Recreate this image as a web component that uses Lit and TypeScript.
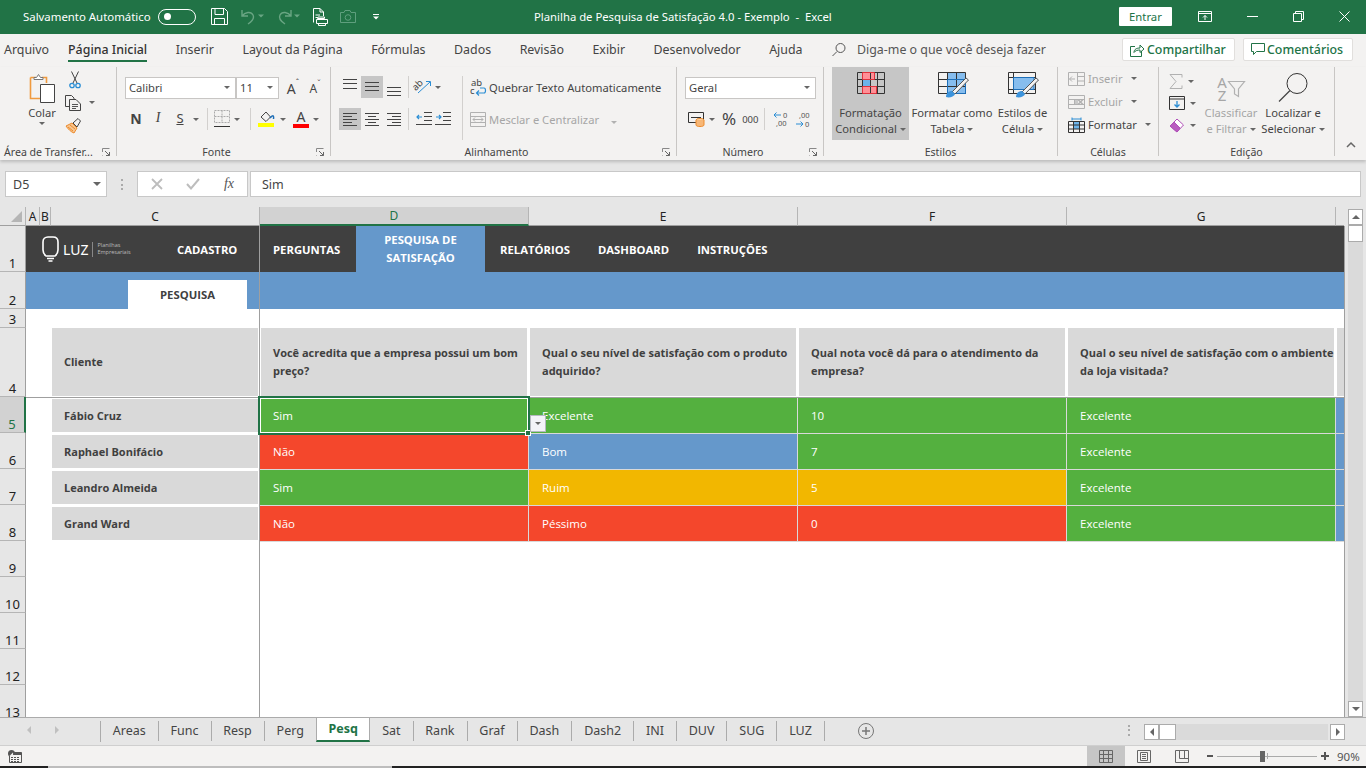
// app.ts
import { LitElement, html, css, svg } from 'lit';
import { customElement } from 'lit/decorators.js';

const ic = (w: number, h: number, body: unknown) => html`<svg class="ic" width=${w} height=${h} viewBox="0 0 ${w} ${h}" fill="none">${body}</svg>`;
const caret = html`<i class="caret"></i>`;

const lines = (items: number[][], c = '#444') =>
  ic(22, 22, items.map(([x1, x2, y]) => svg`<path d="M${x1} ${y + 0.5}H${x2}" stroke=${c}/>`));

const I = {
  save: ic(17, 17, svg`<path d="M.5.5H13.5L16.5 3.5V16.5H.5ZM4 .5V6.5H12.5V.5M3.5 16.5V10.5H13.5V16.5" stroke="#fff"/>`),
  undo: ic(24, 17, svg`<path d="M2 2V8H8M2 8C5 4 11 3 13 7C15 11 11 14 8 16" stroke="#69a583" stroke-width="1.4"/><path d="M18 6.5h6l-3 3z" fill="#69a583"/>`),
  redo: ic(24, 17, svg`<path d="M15 2V8H9M15 8C12 4 6 3 4 7C2 11 6 14 9 16" stroke="#69a583" stroke-width="1.4"/><path d="M18 6.5h6l-3 3z" fill="#69a583"/>`),
  print: ic(16, 18, svg`<path d="M1.5 14.5V.5H8L11.5 4V8M8 .5V4H11.5M3.5 7H8M3.5 9.500H7" stroke="#fff"/><path d="M5.500 10.500H12.500V9H6ZM4.500 11.500H15.500V15.500H4.500ZM6.500 15V17.500H13.500V15" stroke="#fff" fill="#217346"/>`),
  camera: ic(16, 13, svg`<path d="M.5 2.500H4L5 .5H10L11 2.500H15.500V12.500H.5Z" stroke="#5f9f7e"/><circle cx="8" cy="7.500" r="2.800" stroke="#5f9f7e"/>`),
  custom: ic(8, 8, svg`<path d="M1 1.500H7" stroke="#fff"/><path d="M1 3.500H7L4 6.500Z" fill="#fff"/>`),
  ribbonMode: ic(14, 11, svg`<path d="M.5.5H13.500V10.500H.5ZM.5 2.500H13.500M7 9V4.500M5 6.500L7 4.500L9 6.500" stroke="#fff"/>`),
  min: ic(11, 11, svg`<path d="M0 5.500H11" stroke="#fff"/>`),
  restore: ic(11, 11, svg`<path d="M.5 2.500H8.500V10.500H.5ZM2.500 2.500V.5H10.500V8.500H8.500" stroke="#fff"/>`),
  close: ic(11, 11, svg`<path d="M.5.5L10.500 10.500M10.500.5L.5 10.500" stroke="#fff"/>`),
  search: ic(16, 16, svg`<circle cx="9.500" cy="6" r="4.500" stroke="#555"/><path d="M6 9.500L1.500 14" stroke="#555"/>`),
  share: ic(15, 14, svg`<path d="M5 3.500H.5V13.500H11.500V8" stroke="#217346"/><path d="M4 9.500C4 6 7 5 10 5V2L14 6L10 9.500V7C8 7 5 7.500 4 9.500Z" stroke="#217346"/>`),
  comment: ic(14, 13, svg`<path d="M.5.5H13.500V8.500H5.500L2.500 11.500V8.500H.5Z" stroke="#217346"/>`),
  paste: ic(30, 32, svg`<path d="M3.500 5.500H9M15 5.500H19.500V11M3.500 5.500V26.500H13" stroke="#f09a3e" stroke-width="1.600"/><path d="M7 7.500V5.500H9.500L11.500 2.500L13.500 5.500H16V7.500Z" fill="#fff" stroke="#777"/><path d="M13.500 12.500H27.500V30.500H13.500Z" fill="#fff" stroke="#444"/>`),
  scissors: ic(12, 18, svg`<path d="M2.500 .5L8 12M9.500 .5L4 12" stroke="#444"/><circle cx="3" cy="14.500" r="2.200" stroke="#2a8dd4" stroke-width="1.300"/><circle cx="9" cy="14.500" r="2.200" stroke="#2a8dd4" stroke-width="1.300"/>`),
  copy: ic(16, 16, svg`<path d="M.5.5H6.500L9 3V11.500H.5Z" stroke="#444"/><path d="M4.500 4.500H11L15.500 9V15.500H4.500Z" fill="#f3f2f1" stroke="#444"/><path d="M7 9.500H13M7 11.500H13M7 13.500H11" stroke="#555"/>`),
  brush: ic(17, 17, svg`<path d="M1 9L7 6L12 11L9 16C6 15 3 12 1 9Z" fill="#f7c691" stroke="#ed8b2d"/><path d="M3 10L8 14M5 8L10 12" stroke="#ed8b2d"/><path d="M8 6L13 1.500L15.500 4L12 10Z" fill="#f3f2f1" stroke="#444"/>`),
  launch: ic(8, 8, svg`<path d="M.5 4V.5H7.500M.5 7.500H1" stroke="#888"/><path d="M3 3L7.500 7.500M7.500 4V7.500H4" stroke="#666"/>`),
  borders: ic(16, 18, svg`<path d="M.5 .5H15.500V12.500H.5Z M8 .5V12.500M.5 6.500H15.500" stroke="#aaa" stroke-dasharray="2 1"/><path d="M0 16.500H16" stroke="#333"/>`),
  fill: ic(18, 18, svg`<path d="M3 7L8 2L12.500 7L8 11.500Z" stroke="#444"/><path d="M12 8C15 5 16 5 15.500 9" stroke="#1d6fb8" stroke-width="1.500"/><rect y="13" width="16" height="4" fill="#ffff00"/>`),
  orient: ic(20, 18, svg`<text transform="rotate(-45 7 9)" x="1" y="9" font-size="9.500" fill="#444" font-family="Noto Sans">ab</text><path d="M5 15L17 4M13 3.500H17.500V8" stroke="#2a8dd4"/>`),
  wrap: ic(16, 18, svg`<text x="1" y="8" font-size="9.500" fill="#444" font-family="Noto Sans">ab</text><text x="0" y="16" font-size="9.500" fill="#444" font-family="Noto Sans">c</text><path d="M10 10H14C16 10 16 15 14 15H7M9 12.500L6.500 15L9 17.500" stroke="#2a8dd4" stroke-width="1.200"/>`),
  merge: ic(16, 15, svg`<path d="M.5.5H15.500V14.500H.5ZM.5 4.500H15.500M.5 10.500H15.500M3 7.500H13M5 5.500L3 7.500L5 9.500M11 5.500L13 7.500L11 9.500" stroke="#b1b1b1"/>`),
  accounting: ic(17, 16, svg`<path d="M.5 1.500H15.500V11.500H.5ZM3 6.500H13" stroke="#333"/><ellipse cx="12" cy="9" rx="4" ry="1.500" fill="#fbd6a8" stroke="#ed8b2d"/><path d="M8 9V14C8 16 16 16 16 14V9" fill="#f7b777" stroke="#ed8b2d"/>`),
  decUp: ic(16, 17, svg`<path d="M8 4H1M3.500 1.500L1 4L3.500 6.500" stroke="#2a8dd4"/><text x="10" y="7" font-size="7.500" fill="#555" font-family="Noto Sans">0</text><text x="3" y="15" font-size="7.500" fill="#555" font-family="Noto Sans">,00</text>`),
  decDown: ic(16, 17, svg`<text x="4" y="7" font-size="7.500" fill="#555" font-family="Noto Sans">,00</text><path d="M1 13H8M5.500 10.500L8 13L5.500 15.500" stroke="#2a8dd4"/><text x="10" y="16" font-size="7.500" fill="#555" font-family="Noto Sans">0</text>`),
  condFormat: ic(28, 22, svg`<path d="M5.500 .5H17.500V7.500H5.500Z M5.500 14.500H19.500V21.500H5.500Z" fill="#ff8f96" stroke="#e0313b"/><rect x="5.500" y="7.500" width="8" height="7" fill="#6db4ea" stroke="#1d6fb8"/><path d="M.5.5H27.500V21.500H.5ZM.5 7.500H27.500M.5 14.500H27.500M5.500.5V21.500M13.500.5V21.500M20.500.5V21.500" stroke="#333"/><path d="M5.500 .5H17.500V7.500H5.500Z M5.500 14.500H19.500V21.500H5.500Z" stroke="#e0313b"/>`),
  tableStyle: ic(32, 26, svg`<rect x="10" y="1" width="18" height="21" fill="#86bdee"/><path d="M.5.5H27.500V21.500H.5ZM.5 7.500H27.500M.5 14.500H27.500M9.500.5V21.500M18.500.5V21.500" stroke="#333"/><path d="M9.500 7.500H27.500V21.500H9.500Z" stroke="#1d6fb8"/><path d="M14 20L28 6L30.500 8L17 22Z" fill="#f3f2f1" stroke="#555"/><path d="M8 25C8 21 11 19 14 19L17 22C16 25 11 26 8 25Z" fill="#3d94dc"/>`),
  cellStyle: ic(32, 26, svg`<rect x="5" y="5" width="21" height="12" fill="#86bdee"/><path d="M.5.5H27.500V21.500H.5ZM.5 5.500H27.500M.5 17.500H27.500M5.500.5V21.500" stroke="#333"/><path d="M5.500 5.500H26V17.500H5.500Z" stroke="#1d6fb8"/><path d="M14 20L28 6L30.500 8L17 22Z" fill="#f3f2f1" stroke="#555"/><path d="M8 25C8 21 11 19 14 19L17 22C16 25 11 26 8 25Z" fill="#3d94dc"/>`),
  insert: ic(17, 14, svg`<path d="M.5.5H16.500V13.500H.5ZM9.500.5V13.500M9.500 4.500H16.500M9.500 9H16.500M7 7H1.500M4 4.500L1.500 7L4 9.500" stroke="#b1b1b1"/>`),
  del: ic(17, 14, svg`<path d="M.5.5H16.500V13.500H.5ZM.5 4.500H16.500M.5 9.500H16.500M6.500 4.500V9.500" stroke="#b1b1b1"/><path d="M10 4.500L15 9.500M15 4.500L10 9.500" stroke="#b1b1b1" stroke-width="1.500"/><rect x="7" y="5" width="3" height="4" fill="#c8c8c8"/>`),
  format: ic(17, 16, svg`<rect x="5" y="5" width="7" height="7" fill="#6db4ea"/><path d="M.5 4.500H16.500V15.500H.5ZM.5 8H16.500M.5 12H16.500M5.500 4.500V15.500M11.500 4.500V15.500" stroke="#333"/><path d="M4 2H13M4 .5V3.500M13 .5V3.500" stroke="#2a8dd4"/>`),
  sigma: ic(14, 15, svg`<path d="M13 3.500V.5H1L7 7.500L1 14.500H13V11.500" stroke="#b1b1b1"/>`),
  fillDown: ic(16, 14, svg`<path d="M.5.5H15.500V13.500H.5ZM.5 3H15.500" stroke="#333"/><path d="M8 5V11M5.500 8.500L8 11L10.500 8.500" stroke="#2a8dd4" stroke-width="1.300"/>`),
  eraser: ic(16, 16, svg`<path d="M1 9L8 2L14.500 8L8 15Z" fill="#fff" stroke="#b04fb8"/><path d="M1 9L5 5L11 11L8 15Z" fill="#b95cc0" stroke="#b04fb8"/>`),
  funnel: ic(17, 16, svg`<path d="M.5 .5H16.500L10.500 8V15.500L6.500 13V8Z" stroke="#b1b1b1" stroke-width="1.200"/>`),
  find: ic(31, 30, svg`<circle cx="19" cy="11.500" r="10" stroke="#333"/><path d="M12 18.500L1 29.500" stroke="#444" stroke-width="1.300"/>`),
  collapse: ic(10, 6, svg`<path d="M1 5L5 1L9 5" stroke="#666" stroke-width="1.500"/>`),
  cancel: ic(12, 12, svg`<path d="M1 1L11 11M11 1L1 11" stroke="#bdbdbd" stroke-width="1.800"/>`),
  enter: ic(14, 12, svg`<path d="M1 6L5 10.500L13 1" stroke="#bdbdbd" stroke-width="2"/>`),
  corner: ic(11, 11, svg`<path d="M11 0V11H0Z" fill="#b5b5b5"/>`),
  plus: ic(16, 16, svg`<circle cx="8" cy="8" r="7.500" stroke="#777"/><path d="M8 4V12M4 8H12" stroke="#777" stroke-width="1.500"/>`),
  macro: ic(14, 13, svg`<circle cx="3.500" cy="3.500" r="3.500" fill="#555"/><path d="M5 2.500H13.500V12.500H1.500V6" stroke="#555" fill="#f3f2f1"/><path d="M1.500 2.500H13.500V5H1.500Z" fill="#555" transform="translate(4 0) scale(.7 1)"/><path d="M3 7.500H12M3 9.500H12M3 11.500H12" stroke="#555" stroke-dasharray="2 1"/>`),
  viewNormal: ic(14, 13, svg`<path d="M.5.5H13.500V12.500H.5ZM.5 4.500H13.500M.5 8.500H13.500M4.500.5V12.500M9.500.5V12.500" stroke="#666"/>`),
  viewPage: ic(14, 13, svg`<path d="M.5.5H13.500V12.500H.5Z M3.500 2.500H10.500V10.500H3.500ZM5 4.500H9M5 6.500H9M5 8.500H9" stroke="#666"/>`),
  viewBreak: ic(14, 13, svg`<path d="M.5.5H13.500V12.500H.5ZM4.500.5V8.500H13.500M9.500.5V8.500" stroke="#666"/>`),
  bulb: ic(17, 26, svg`<path d="M4 20C1.500 18 1 16 1 14V6C1 3 3 1 6 1H11C14 1 16 3 16 6V14C16 16 15.500 18 13 20Z" stroke="#fff" stroke-width="1.600"/><path d="M5 22.500H12M6.500 25H10.500" stroke="#fff" stroke-width="1.400"/>`),
};

const TABS = ['Arquivo', 'Página Inicial', 'Inserir', 'Layout da Página', 'Fórmulas', 'Dados', 'Revisão', 'Exibir', 'Desenvolvedor', 'Ajuda'];
const COLS = [['A', 'narrow-a'], ['B', 'narrow-b'], ['C', 'wide-c'], ['D', 'sel'], ['E', ''], ['F', ''], ['G', '']];
const QUESTIONS = [
  'Você acredita que a empresa possui um bom preço?',
  'Qual o seu nível de satisfação com o produto adquirido?',
  'Qual nota você dá para o atendimento da empresa?',
  'Qual o seu nível de satisfação com o ambiente da loja visitada?',
];
const ROWS = [
  { name: 'Fábio Cruz', cells: [['Sim', 'c-g'], ['Excelente', 'c-g'], ['10', 'c-g'], ['Excelente', 'c-g']] },
  { name: 'Raphael Bonifácio', cells: [['Não', 'c-r'], ['Bom', 'c-b'], ['7', 'c-g'], ['Excelente', 'c-g']] },
  { name: 'Leandro Almeida', cells: [['Sim', 'c-g'], ['Ruim', 'c-y'], ['5', 'c-y'], ['Excelente', 'c-g']] },
  { name: 'Grand Ward', cells: [['Não', 'c-r'], ['Péssimo', 'c-r'], ['0', 'c-r'], ['Excelente', 'c-g']] },
];
const SHEETS = ['Areas', 'Func', 'Resp', 'Perg', 'Pesq', 'Sat', 'Rank', 'Graf', 'Dash', 'Dash2', 'INI', 'DUV', 'SUG', 'LUZ'];

@customElement('app-root')
export class AppRoot extends LitElement {
  static override styles = css`
    :host {
      display: block;
      width: 1366px;
      height: 768px;
      overflow: hidden;
      background: #e6e6e6;
      font-family: 'Noto Sans', 'Open Sans', sans-serif;
      font-size: 12px;
      color: #444;
    }
    .ic { display: block; flex: none; overflow: visible; }
    .caret {
      display: inline-block;
      flex: none;
      width: 0;
      height: 0;
      border-left: 3px solid transparent;
      border-right: 3px solid transparent;
      border-top: 3px solid #666;
    }

    .title {
      height: 34px;
      box-sizing: border-box;
      padding: 0 0 1px 23px;
      background: #217346;
      color: #fff;
      display: flex;
      align-items: center;
      font-size: 11.300px;
    }
    .qat { width: 511px; display: flex; align-items: center; flex: none; }
    .autosave { width: 135px; flex: none; white-space: nowrap; font-size: 11.400px; }
    .toggle {
      width: 38px; height: 16px; border: 1px solid #fff; border-radius: 9px;
      box-sizing: border-box; flex: none; display: flex; align-items: center; padding-left: 5px; margin-right: 15px;
    }
    .toggle i { width: 7px; height: 7px; border-radius: 50%; background: #fff; }
    .qat .ic { margin-right: 12px; }
    .qat .gap { margin-left: 4px; }
    .doc { width: 585px; flex: none; white-space: pre; }
    .enter-btn {
      width: 53px; height: 19px; background: #fff; color: #217346; display: flex;
      align-items: center; justify-content: center; flex: none; margin-right: 26px; border-radius: 1px;
    }
    .win { display: flex; align-items: center; }
    .win .wa { margin-right: 35px; }

    .tabs {
      height: 33px;
      box-sizing: border-box;
      padding: 0 0 2px 4px;
      background: #f3f2f1;
      display: flex;
      align-items: center;
      font-size: 12.400px;
    }
    .tabs span { margin-right: 28.500px; white-space: nowrap; }
    .tabs .first { margin-right: 19px; }
    .tabs .on { position: relative; color: #333; font-weight: 500; }
    .tabs .on::after {
      content: ''; position: absolute; left: 0; right: 0; bottom: -4px; height: 2px; background: #217346;
    }
    .tell { display: flex; align-items: center; gap: 10px; width: 291px; flex: none; color: #555; }
    .tabs .tell span { margin: 0; }
    .tbtn {
      height: 23px; box-sizing: border-box; background: #fff; border: 1px solid #e1dfdd; border-radius: 2px;
      display: flex; align-items: center; gap: 2px; padding: 0 7px; color: #217346; font-size: 12.400px; font-weight: 500; flex: none;
    }
    .share { width: 113px; margin-right: 8px; }
    .cmt { width: 110px; }

    .ribbon {
      height: 93px;
      background: #f3f2f1;
      display: flex;
      box-shadow: 0 2px 3px rgba(0,0,0,.18);
      position: relative;
      font-size: 11.200px;
    }
    .group {
      height: 89px;
      border-right: 1px solid #c8c6c4;
      display: flex;
      flex-direction: column;
      flex: none;
      box-sizing: border-box;
    }
    .body { height: 78px; display: flex; box-sizing: border-box; flex: none; }
    .glabel {
      display: grid;
      grid-template-columns: 1fr 14px;
      align-items: center;
      height: 11px;
      font-size: 10.600px;
      text-align: center;
      white-space: nowrap;
    }
    .noland { grid-template-columns: 1fr; }
    .w-clip { width: 117px; }
    .w-font { width: 214px; }
    .w-align { width: 346px; }
    .w-num { width: 147px; }
    .w-sty { width: 234px; }
    .w-cel { width: 101px; }
    .w-edit { width: 176px; }
    .leftlab { text-align: left; padding-left: 4px; }

    .big {
      display: flex; flex-direction: column; align-items: center; box-sizing: border-box;
      height: 73px; padding-top: 5px; line-height: 16px; text-align: center; flex: none; white-space: nowrap;
    }
    .big .iconbox { height: 33px; flex: none; }
    .big .t { display: flex; align-items: center; gap: 3px; justify-content: center; }
    .big .caret { margin-top: 1px; }
    .mute { color: #a6a6a6; }
    .w-paste { width: 36px; margin-left: 24px; }
    .cliprow { display: flex; flex-direction: column; margin-left: 3px; padding-top: 1px; }
    .cr { height: 23px; display: flex; align-items: center; gap: 8px; margin-left: 2px; }
    .scis { margin-left: 4px; }

    .pad-font { flex-direction: column; padding: 10px 0 0 8px; }
    .row { display: flex; align-items: center; }
    .r1 { height: 22px; margin-bottom: 9px; }
    .r2 { height: 22px; }
    .select {
      background: #fff; border: 1px solid #c8c6c4; box-sizing: border-box; height: 22px; display: flex;
      align-items: center; justify-content: space-between; padding: 0 5px 2px 3px; flex: none; color: #444;
    }
    .s-font { width: 111px; }
    .s-size { width: 43px; margin-right: 3px; }
    .grow { font-size: 14px; width: 22px; display: flex; justify-content: center; }
    .grow sup { font-size: 8px; color: #555; line-height: 1; }
    .shr { font-size: 12px; }
    .b { width: 22px; height: 22px; display: flex; align-items: center; justify-content: center; flex: none; font-size: 14px; padding-bottom: 2px; box-sizing: border-box; }
    .n { font-weight: 700; }
    .i { font-family: 'Liberation Serif', serif; font-style: italic; }
    .s { text-decoration: underline; font-size: 13px; }
    .cw { width: 10px; display: flex; justify-content: center; flex: none; }
    .cw2 { width: 14px; display: flex; justify-content: center; flex: none; }
    .vsep { width: 1px; height: 22px; background: #d2d0ce; margin: 0 6px; flex: none; }
    .fillm { margin-left: 1px; }
    .fontA { width: 16px; height: 18px; position: relative; display: flex; justify-content: center; font-size: 14px; line-height: 13px; margin-left: 3px; }
    .fontA::after { content: ''; position: absolute; left: 0; right: 0; bottom: 0; height: 4px; background: #f00; }

    .pad-al { padding: 9px 0 0 8px; }
    .al-left { width: 123px; flex: none; display: flex; flex-direction: column; height: 64px; border-right: 1px solid #d2d0ce; }
    .al-r2 { margin-top: 10px; }
    .on-b { background: #c6c6c6; }
    .b22 { width: 22px; height: 22px; display: flex; align-items: center; justify-content: center; flex: none; }
    .sp-or { margin: 0 4px 0 3px; }
    .ind { margin-left: 3px; }
    .al-right { padding-left: 7px; display: flex; flex-direction: column; }
    .al-right .row { gap: 3px; white-space: nowrap; }
    .merge-caret { margin-left: 9px; }
    .merge-caret .caret { border-top-color: #b1b1b1; }
    .al-r2b { margin-top: 10px; }

    .pad-num { flex-direction: column; padding: 10px 0 0 8px; }
    .s-num { width: 131px; }
    .pct { font-size: 17px; margin: 0 6px 0 3px; line-height: 20px; }
    .thou { font-size: 9.500px; }
    .numr2 { padding-left: 3px; }
    .dec { margin: 0 6px 0 2px; }

    .pad-sty { padding-left: 8px; }
    .w-cf { width: 77px; background: #c6c6c6; }
    .w-ft { width: 86px; }
    .w-cs { width: 55px; }
    .w-ft .iconbox, .w-cs .iconbox { padding-left: 3px; }

    .pad-cel { flex-direction: column; padding-left: 10px; }
    .cel { height: 23px; display: flex; align-items: center; gap: 3px; white-space: nowrap; }
    .cel .caret { margin-left: 5px; }

    .pad-edit { padding-left: 10px; }
    .ed-col { width: 35px; flex: none; padding-top: 3px; }
    .ed { height: 22px; display: flex; align-items: center; gap: 5px; }
    .w-sort { width: 54px; }
    .w-find { width: 70px; }
    .sorti { display: flex; align-items: center; gap: 0; }
    .az { display: flex; flex-direction: column; font-size: 15px; line-height: 13px; margin-right: 1px; }
    .coll { flex: 1; display: flex; justify-content: flex-end; align-items: flex-end; padding: 0 10px 8px 0; height: 89px; box-sizing: border-box; }

    .fbar {
      height: 47px;
      box-sizing: border-box;
      padding: 11px 5px 10px;
      display: flex;
      align-items: stretch;
      font-size: 12.500px;
    }
    .fbox { background: #fff; border: 1px solid #c8c8c8; box-sizing: border-box; display: flex; align-items: center; flex: none; }
    .name { width: 102px; justify-content: space-between; padding: 0 5px 0 7px; }
    .name .caret { border-left-width: 4px; border-right-width: 4px; border-top-width: 4px; }
    .dots { width: 30px; display: flex; justify-content: center; align-items: center; flex: none; }
    .dots i { width: 2px; height: 11px; background: repeating-linear-gradient(#aaa 0 2px, transparent 2px 4.500px); }
    .fns { width: 111px; margin-right: 2px; padding: 0 13px 0 13px; justify-content: space-between; }
    .fx { font-family: 'Liberation Serif', serif; font-style: italic; font-size: 14px; color: #555; }
    .input { flex: 1; padding-left: 11px; }

    .main { display: flex; height: 510px; }
    .work { width: 1344px; flex: none; }
    .heads { height: 19px; display: flex; }
    .hc {
      width: 269px; flex: none; display: flex; align-items: center; justify-content: center; box-sizing: border-box;
      border-right: 1px solid #b5b5b5; border-bottom: 1px solid #9f9f9f; color: #222; font-size: 12px;
    }
    .corner { width: 26px; flex: none; box-sizing: border-box; display: flex; justify-content: flex-end; align-items: flex-end; padding: 0 3px 3px 0; border-right: 1px solid #b5b5b5; border-bottom: 1px solid #9f9f9f; }
    .narrow-a { width: 14px; }
    .narrow-b { width: 11px; }
    .wide-c { width: 209px; }
    .hc.sel { background: #d2d2d2; border-bottom: 2px solid #217346; color: #217346; }
    .h-last { width: 8px; border-right: none; }

    .sheet {
      position: relative;
      background: #fff;
      height: 491px;
      display: grid;
      grid-template-columns: 26px 14px 11px 208px 269px 269px 269px 269px 9px;
      grid-template-rows: 46px 37px 19px 69px repeat(9, 36px);
      overflow: hidden;
      font-family: 'Open Sans', 'Noto Sans', sans-serif;
      font-size: 11px;
      border-right: 1px solid #9f9f9f;
      width: 1344px;
      box-sizing: content-box;
    }
    .rh {
      background: #e6e6e6; color: #222; border-right: 1px solid #9f9f9f; border-bottom: 1px solid #b5b5b5;
      display: flex; align-items: flex-end; justify-content: center; box-sizing: border-box;
      font-family: 'Noto Sans', sans-serif; font-size: 13px; line-height: 15px;
    }
    .rh.sel { background: #d2d2d2; color: #217346; border-right: 2px solid #217346; }
    .band { grid-column: 2 / -1; background: #404040; color: #fff; display: flex; align-items: center; font-weight: 700; font-size: 11.300px; }
    .logo { display: flex; align-items: center; width: 151px; flex: none; padding-left: 16px; box-sizing: border-box; gap: 4px; font-weight: 400; }
    .luz { font-size: 14px; font-family: 'Noto Sans', sans-serif; }
    .lsep { width: 1px; height: 15px; background: #888; }
    .lsub { font-size: 5.500px; line-height: 7px; color: #bbb; }
    .nav-c { width: 96px; }
    .nav-p { width: 83px; }
    .nav-on { width: 129px; height: 46px; background: #6598cb; text-align: center; display: flex; align-items: center; justify-content: center; line-height: 18px; flex: none; margin-right: 15px; }
    .nav { flex: none; white-space: nowrap; }
    .nav-gap { margin-right: 28px; }
    .band2 { grid-column: 2 / -1; background: #6598cb; padding: 8px 0 0 102px; display: flex; box-sizing: border-box; }
    .subtab { width: 119px; background: #fff; font-weight: 700; color: #404040; display: flex; align-items: center; justify-content: center; font-size: 11.300px; }
    .blank-all { grid-column: 2 / -1; }
    .blank-2 { grid-column: 2 / 4; }
    .head { background: #d9d9d9; font-weight: 700; color: #404040; line-height: 18px; display: flex; align-items: center; box-sizing: border-box; margin: 0 1px 1px 2px; padding: 0 0 0 12px; }
    .head.c { margin: 0 1px 1px 1px; padding-left: 12px; }
    .head.last { padding: 0; margin-right: 0; }
    .name-cell { background: #d9d9d9; font-weight: 700; color: #404040; display: flex; align-items: center; margin: 2px 1px 1px 1px; padding-left: 12px; }
    .d {
      box-sizing: border-box; color: #fff; display: flex; align-items: center; padding-left: 13px; font-size: 11.500px;
      border-left: 1px solid #d9d9d9; border-top: 1px solid #d9d9d9; position: relative; box-shadow: 0 1px 0 #d9d9d9;
    }
    .c-g { background: #54b03f; }
    .c-r { background: #f4472c; }
    .c-b { background: #6598cb; }
    .c-y { background: #f2b700; }
    .edge { background: #6598cb; border-left: 1px solid #d9d9d9; border-top: 1px solid #d9d9d9; box-shadow: 0 1px 0 #d9d9d9; }
    .cur { position: absolute; left: -2px; top: -2px; right: -2px; bottom: -2px; border: 2px solid #217346; box-shadow: inset 0 0 0 1px #fff; z-index: 3; }
    .handle { position: absolute; right: -3px; bottom: -3px; width: 6px; height: 6px; background: #217346; border: 1px solid #fff; box-sizing: border-box; z-index: 4; }
    .dd { position: absolute; right: -18px; top: 17px; width: 16px; height: 17px; box-sizing: border-box; background: #f3f3f8; border: 1px solid #b5b8c0; display: flex; align-items: center; justify-content: center; z-index: 4; }
    .freeze-v { position: absolute; left: 259px; top: 0; bottom: 0; width: 1px; background: #9f9f9f; z-index: 2; }
    .freeze-h { position: absolute; left: 26px; right: 0; top: 171px; height: 1px; background: #9f9f9f; z-index: 2; }

    .vs { width: 22px; flex: none; display: flex; flex-direction: column; padding: 2px 3px 0 4px; box-sizing: border-box; }
    .vtrack { background: #dadada; flex: 1; display: flex; flex-direction: column; }
    .sbtn { background: #fff; border: 1px solid #ababab; box-sizing: border-box; display: flex; align-items: center; justify-content: center; flex: none; }
    .v-btn { height: 16px; }
    .v-thumb { height: 17px; }
    .v-end { margin-top: auto; }
    .up { border-left: 4px solid transparent; border-right: 4px solid transparent; border-bottom: 4px solid #666; width: 0; height: 0; }
    .dn { border-left: 4px solid transparent; border-right: 4px solid transparent; border-top: 4px solid #666; width: 0; height: 0; }
    .lf { border-top: 4px solid transparent; border-bottom: 4px solid transparent; border-right: 4px solid #666; width: 0; height: 0; }
    .rt { border-top: 4px solid transparent; border-bottom: 4px solid transparent; border-left: 4px solid #666; width: 0; height: 0; }

    .sheets {
      height: 28px;
      box-sizing: border-box;
      display: flex;
      align-items: stretch;
      border-top: 1px solid #ababab;
      font-size: 12.500px;
      padding-bottom: 3px;
    }
    .snav { width: 100px; flex: none; display: flex; align-items: center; gap: 24px; padding-left: 27px; box-sizing: border-box; }
    .snav .lf, .snav .rt { border-left-color: #c0c0c0; border-right-color: #c0c0c0; }
    .stabs { display: flex; flex: none; border-left: 1px solid #ababab; margin: 3px 0 0; }
    .st { padding: 0 12px 2px 11.800px; display: flex; align-items: center; border-right: 1px solid #ababab; margin-bottom: 1px; box-sizing: border-box; }
    .st.on { background: #fff; color: #217346; font-weight: 700; margin: -3px 0 0 -1px; border-left: 1px solid #ababab; border-bottom: 2px solid #217346; padding: 0 11.500px 2px; }
    .addsheet { margin: 1px 0 0 33px; display: flex; align-items: center; flex: none; }
    .hdots { width: 2px; height: 11px; margin: 0 0 0 auto; align-self: center; background: repeating-linear-gradient(#aaa 0 2px, transparent 2px 4.500px); flex: none; }
    .hs { display: flex; height: 16px; margin: 6px 21px 0 14px; flex: none; align-self: flex-start; }
    .h-btn { width: 15px; height: 16px; }
    .h-thumb { width: 17px; height: 16px; }
    .htrack { width: 169px; background: #dadada; display: flex; margin-right: 2px; }

    .status { height: 21px; background: #f3f2f1; border-top: 1px solid #cfcfcf; box-sizing: border-box; display: flex; align-items: center; padding-left: 8px; font-size: 11.500px; color: #555; }
    .status .spacer { flex: 1; }
    .vbtn { height: 20px; display: flex; align-items: center; justify-content: center; flex: none; }
    .vb1 { width: 38px; background: #c6c6c6; margin-right: 5px; }
    .vb2 { width: 28px; margin-right: 10px; }
    .vb3 { width: 28px; margin-right: 11px; }
    .zoomm { width: 6px; height: 2px; background: #555; flex: none; margin-right: 4px; }
    .slider { width: 100px; height: 1px; background: #aaa; position: relative; flex: none; margin-right: 4px; }
    .knob { position: absolute; left: 43px; top: -5px; width: 5px; height: 11px; background: #666; }
    .tick { position: absolute; left: 50px; top: -3px; width: 1px; height: 6px; background: #aaa; }
    .zoomp { width: 8px; height: 8px; flex: none; margin-right: 8px; background: linear-gradient(#555,#555) center/8px 2px no-repeat, linear-gradient(#555,#555) center/2px 8px no-repeat; }
    .pct90 { width: 29px; flex: none; }
    .strip { height: 2px; background: #222; display: flex; }
    .strip i { margin-left: 48px; width: 344px; background: #bdbdbd; }
  `;

  private renderTitle() {
    return html`<div class="title">
      <div class="qat">
        <span class="autosave">Salvamento Automático</span>
        <span class="toggle"><i></i></span>
        ${I.save}${I.undo}${I.redo}${I.print}${I.camera}<span class="gap">${I.custom}</span>
      </div>
      <span class="doc">Planilha de Pesquisa de Satisfação 4.0 - Exemplo  -  Excel</span>
      <span class="enter-btn">Entrar</span>
      <div class="win">
        <span class="wa">${I.ribbonMode}</span><span class="wa">${I.min}</span><span class="wa">${I.restore}</span>${I.close}
      </div>
    </div>`;
  }

  private renderTabs() {
    return html`<div class="tabs">
      ${TABS.map((t, i) => html`<span class=${i === 0 ? 'first' : i === 1 ? 'on' : ''}>${t}</span>`)}
      <div class="tell">${I.search}<span>Diga-me o que você deseja fazer</span></div>
      <div class="tbtn share">${I.share}Compartilhar</div>
      <div class="tbtn cmt">${I.comment}Comentários</div>
    </div>`;
  }

  private renderRibbon() {
    const alignV = [
      lines([[4, 18, 3], [4, 18, 7], [4, 18, 12]]),
      lines([[4, 18, 6], [4, 18, 10], [4, 18, 14]]),
      lines([[4, 18, 11], [4, 18, 15], [4, 18, 19]]),
    ];
    const alignH = [
      lines([[4, 18, 5], [4, 13, 8], [4, 18, 11], [4, 13, 14], [4, 18, 17]]),
      lines([[4, 18, 5], [7, 15, 8], [4, 18, 11], [7, 15, 14], [4, 18, 17]]),
      lines([[4, 18, 5], [9, 18, 8], [4, 18, 11], [9, 18, 14], [4, 18, 17]]),
    ];
    const indentL = ic(16, 14, svg`<path d="M8 .5H16M8 4.500H16M8 8.500H16M0 12.500H16" stroke="#444"/><path d="M6 5H1M3 3L1 5L3 7" stroke="#2a8dd4" stroke-width="1.200"/>`);
    const indentR = ic(16, 14, svg`<path d="M8 .5H16M8 4.500H16M8 8.500H16M0 12.500H16" stroke="#444"/><path d="M1 5H6M4 3L6 5L4 7" stroke="#2a8dd4" stroke-width="1.200"/>`);
    return html`<div class="ribbon">
      <div class="group w-clip">
        <div class="body">
          <div class="big w-paste">
            <div class="iconbox">${I.paste}</div>
            <span class="t">Colar</span>
            <span class="t">${caret}</span>
          </div>
          <div class="cliprow">
            <div class="cr"><span class="scis">${I.scissors}</span></div>
            <div class="cr">${I.copy}${caret}</div>
            <div class="cr">${I.brush}</div>
          </div>
        </div>
        <div class="glabel leftlab"><span>Área de Transfer...</span>${I.launch}</div>
      </div>

      <div class="group w-font">
        <div class="body pad-font">
          <div class="row r1">
            <div class="select s-font">Calibri ${caret}</div>
            <div class="select s-size">11 ${caret}</div>
            <span class="grow">A<sup>ˆ</sup></span>
            <span class="grow shr">A<sup>ˇ</sup></span>
          </div>
          <div class="row r2">
            <span class="b n">N</span><span class="b i">I</span><span class="b s">S</span><span class="cw">${caret}</span>
            <span class="vsep"></span>
            ${I.borders}<span class="cw2">${caret}</span>
            <span class="vsep"></span>
            <span class="fillm">${I.fill}</span><span class="cw2">${caret}</span>
            <span class="fontA">A</span><span class="cw2">${caret}</span>
          </div>
        </div>
        <div class="glabel"><span>Fonte</span>${I.launch}</div>
      </div>

      <div class="group w-align">
        <div class="body pad-al">
          <div class="al-left">
            <div class="row">
              <span class="b22">${alignV[0]}</span><span class="b22 on-b">${alignV[1]}</span><span class="b22">${alignV[2]}</span>
              <span class="vsep sp-or"></span>${I.orient}<span class="cw">${caret}</span>
            </div>
            <div class="row al-r2">
              <span class="b22 on-b">${alignH[0]}</span><span class="b22">${alignH[1]}</span><span class="b22">${alignH[2]}</span>
              <span class="vsep sp-or"></span><span class="ind">${indentL}</span><span class="ind">${indentR}</span>
            </div>
          </div>
          <div class="al-right">
            <div class="row r2">${I.wrap}<span>Quebrar Texto Automaticamente</span></div>
            <div class="row r2 al-r2b mute">${I.merge}<span>Mesclar e Centralizar</span><span class="merge-caret">${caret}</span></div>
          </div>
        </div>
        <div class="glabel"><span>Alinhamento</span>${I.launch}</div>
      </div>

      <div class="group w-num">
        <div class="body pad-num">
          <div class="select s-num r1">Geral ${caret}</div>
          <div class="row r2 numr2">
            ${I.accounting}<span class="cw2">${caret}</span>
            <span class="pct">%</span><span class="thou">000</span>
            <span class="vsep"></span>
            <span class="dec">${I.decUp}</span>${I.decDown}
          </div>
        </div>
        <div class="glabel"><span>Número</span>${I.launch}</div>
      </div>

      <div class="group w-sty">
        <div class="body pad-sty">
          <div class="big w-cf">
            <div class="iconbox">${I.condFormat}</div>
            <span class="t">Formatação</span><span class="t">Condicional ${caret}</span>
          </div>
          <div class="big w-ft">
            <div class="iconbox">${I.tableStyle}</div>
            <span class="t">Formatar como</span><span class="t">Tabela ${caret}</span>
          </div>
          <div class="big w-cs">
            <div class="iconbox">${I.cellStyle}</div>
            <span class="t">Estilos de</span><span class="t">Célula ${caret}</span>
          </div>
        </div>
        <div class="glabel noland"><span>Estilos</span></div>
      </div>

      <div class="group w-cel">
        <div class="body pad-cel">
          <div class="cel mute">${I.insert}<span>Inserir</span>${caret}</div>
          <div class="cel mute">${I.del}<span>Excluir</span>${caret}</div>
          <div class="cel">${I.format}<span>Formatar</span>${caret}</div>
        </div>
        <div class="glabel noland"><span>Células</span></div>
      </div>

      <div class="group w-edit">
        <div class="body pad-edit">
          <div class="ed-col">
            <div class="ed">${I.sigma}${caret}</div>
            <div class="ed">${I.fillDown}${caret}</div>
            <div class="ed">${I.eraser}${caret}</div>
          </div>
          <div class="big w-sort mute">
            <div class="iconbox sorti"><span class="az"><span>A</span><span>Z</span></span>${I.funnel}</div>
            <span class="t">Classificar</span><span class="t">e Filtrar ${caret}</span>
          </div>
          <div class="big w-find">
            <div class="iconbox">${I.find}</div>
            <span class="t">Localizar e</span><span class="t">Selecionar ${caret}</span>
          </div>
        </div>
        <div class="glabel noland"><span>Edição</span></div>
      </div>
      <div class="coll">${I.collapse}</div>
    </div>`;
  }

  private renderFormula() {
    return html`<div class="fbar">
      <div class="fbox name">D5 ${caret}</div>
      <div class="dots"><i></i></div>
      <div class="fbox fns">${I.cancel}${I.enter}<span class="fx">fx</span></div>
      <div class="fbox input">Sim</div>
    </div>`;
  }

  private renderSheet() {
    const rowHead = (n: number) => html`<div class="rh ${n === 5 ? 'sel' : ''}">${n}</div>`;
    return html`<div class="sheet">
      ${rowHead(1)}
      <div class="band">
        <div class="logo">${I.bulb}<span class="luz">LUZ</span><span class="lsep"></span><span class="lsub">Planilhas<br />Empresariais</span></div>
        <span class="nav nav-c">CADASTRO</span>
        <span class="nav nav-p">PERGUNTAS</span>
        <span class="nav-on">PESQUISA DE<br />SATISFAÇÃO</span>
        <span class="nav nav-gap">RELATÓRIOS</span>
        <span class="nav nav-gap">DASHBOARD</span>
        <span class="nav">INSTRUÇÕES</span>
      </div>
      ${rowHead(2)}
      <div class="band2"><div class="subtab">PESQUISA</div></div>
      ${rowHead(3)}
      <div class="blank-all"></div>
      ${rowHead(4)}
      <div class="blank-2"></div>
      <div class="head c">Cliente</div>
      ${QUESTIONS.map((q) => html`<div class="head">${q}</div>`)}
      <div class="head last"></div>
      ${ROWS.map((r, ri) => html`
        ${rowHead(ri + 5)}
        <div class="blank-2"></div>
        <div class="name-cell">${r.name}</div>
        ${r.cells.map(([v, c], ci) => html`<div class="d ${c}">${v}${ri === 0 && ci === 0
          ? html`<div class="cur"></div><div class="handle"></div><div class="dd"><i class="caret"></i></div>`
          : ''}</div>`)}
        <div class="edge"></div>
      `)}
      ${[9, 10, 11, 12, 13].map((n) => html`${rowHead(n)}<div class="blank-all"></div>`)}
      <div class="freeze-v"></div>
      <div class="freeze-h"></div>
    </div>`;
  }

  private renderBottom() {
    return html`<div class="sheets">
      <div class="snav"><i class="lf"></i><i class="rt"></i></div>
      <div class="stabs">
        ${SHEETS.map((s) => html`<div class="st ${s === 'Pesq' ? 'on' : ''}">${s}</div>`)}
      </div>
      <div class="addsheet">${I.plus}</div>
      <div class="hdots"></div>
      <div class="hs">
        <div class="sbtn h-btn"><i class="lf"></i></div>
        <div class="htrack"><div class="sbtn h-thumb"></div></div>
        <div class="sbtn h-btn"><i class="rt"></i></div>
      </div>
    </div>
    <div class="status">
      ${I.macro}
      <span class="spacer"></span>
      <div class="vbtn vb1">${I.viewNormal}</div>
      <div class="vbtn vb2">${I.viewPage}</div>
      <div class="vbtn vb3">${I.viewBreak}</div>
      <span class="zoomm"></span>
      <div class="slider"><span class="knob"></span><span class="tick"></span></div>
      <span class="zoomp"></span>
      <span class="pct90">90%</span>
    </div>
    <div class="strip"><i></i></div>`;
  }

  override render() {
    return html`
      ${this.renderTitle()}
      ${this.renderTabs()}
      ${this.renderRibbon()}
      ${this.renderFormula()}
      <div class="main">
        <div class="work">
          <div class="heads">
            <div class="corner">${I.corner}</div>
            ${COLS.map(([l, c]) => html`<div class="hc ${c}">${l}</div>`)}
            <div class="hc h-last"></div>
          </div>
          ${this.renderSheet()}
        </div>
        <div class="vs">
          <div class="vtrack">
            <div class="sbtn v-btn"><i class="up"></i></div>
            <div class="sbtn v-thumb"></div>
            <div class="sbtn v-btn v-end"><i class="dn"></i></div>
          </div>
        </div>
      </div>
      ${this.renderBottom()}
    `;
  }
}
